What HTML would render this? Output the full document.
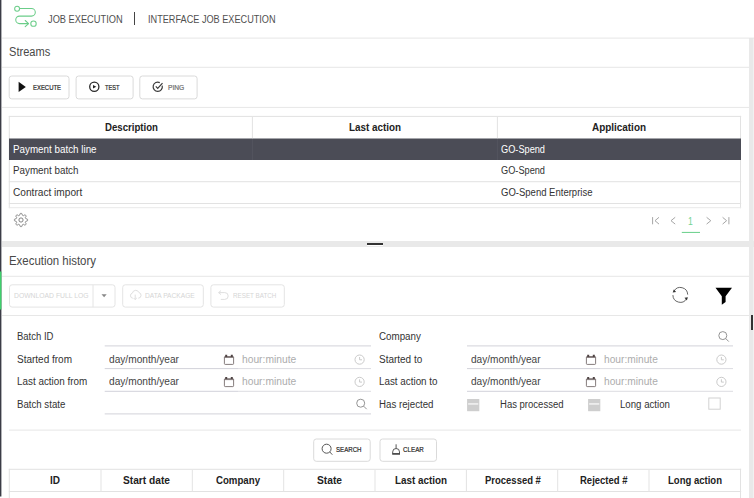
<!DOCTYPE html>
<html><head><meta charset="utf-8">
<style>
*{box-sizing:border-box;margin:0;padding:0}
html,body{width:754px;height:498px;overflow:hidden;background:#fff}
body{position:relative;font-family:"Liberation Sans",sans-serif;color:#333;font-size:10px}
.abs{position:absolute}
.t{position:absolute;white-space:nowrap;line-height:1;transform-origin:0 50%}
.hl{position:absolute;height:1px;background:#e6e6e6}
.vl{position:absolute;width:1px;background:#e4e4e4}
.btn{position:absolute;height:24px;border:1px solid #dedede;border-radius:3px;background:#fff}
.ul{position:absolute;height:1px;background:#d6d6de}
svg{position:absolute;overflow:visible}
</style></head><body>
<!-- edges -->
<svg style="left:0;top:0" width="4" height="498" viewBox="0 0 4 498"><rect x="0" y="0" width="1.400" height="496.500" fill="#3b3c46"/><rect x="0" y="271.500" width="1.400" height="38" fill="#3fd06c"/></svg>
<div class="abs" style="left:749px;top:38px;width:4px;height:460px;background:#e9e9e9"></div><div class="abs" style="left:753px;top:38px;width:1px;height:460px;background:#f1f1f1"></div>
<div class="abs" style="left:751px;top:315px;width:2px;height:15px;background:#333"></div>

<svg style="left:0;top:0" width="754" height="498" viewBox="0 0 754 498">
<g fill="#e7e7e7">
<rect x="2" y="37.600" width="752" height="1"/>
<rect x="2" y="66.800" width="747" height="1"/>
<rect x="2" y="106.900" width="747" height="1"/>
<rect x="2" y="275.800" width="747" height="1"/>
<rect x="2" y="315" width="747" height="1"/>
<rect x="9" y="429.600" width="732" height="1"/>
</g>
<g fill="#e2e2e2">
<rect x="8.800" y="115.900" width="732.400" height="1"/>
<rect x="8.800" y="181.200" width="732.400" height="1"/>
<rect x="8.800" y="203" width="732.400" height="1"/>
<rect x="8.800" y="115.900" width="1" height="92.300"/>
<rect x="740" y="115.900" width="1" height="92.300"/>
<rect x="8.800" y="468.800" width="732.400" height="1"/>
<rect x="8.800" y="491" width="732.400" height="1"/>
<rect x="8.800" y="468.800" width="1" height="30"/>
<rect x="740" y="468.800" width="1" height="30"/>
</g>
<rect x="8.800" y="207.200" width="732.400" height="1" fill="#e9e9e9"/>
</svg>
<!-- header -->
<svg style="left:0;top:0" width="45" height="37" viewBox="0 0 45 37" fill="none" stroke="#6bcd89" stroke-width="1.050" stroke-linecap="round" stroke-linejoin="round">
<circle cx="17.100" cy="8.700" r="2.450"/>
<path d="M19.700 8.500H31.500a3.800 3.800 0 0 1 0 7.600H19.500a3.750 3.750 0 0 0 0 7.500H28.200"/>
<path d="M25.200 20.500L28.600 23.600L25.200 26.700"/>
<circle cx="33.500" cy="23.650" r="2.700"/>
</svg>
<div class="abs" style="left:134px;top:12px;width:1px;height:13px;background:#444"></div>

<!-- streams panel -->
<svg style="left:0;top:0" width="200" height="110" viewBox="0 0 200 110">
<path d="M18.600 81.800L25.800 86.900L18.600 92Z" fill="#111"/>
<circle cx="94.3" cy="86.7" r="4.600" fill="none" stroke="#2a2a2a" stroke-width="1.300"/>
<path d="M93 84.9L96.3 86.7L93 88.5Z" fill="#222"/>
<path d="M162.200 85.600A4.600 4.600 0 1 1 159.800 82.600" fill="none" stroke="#3a3a3a" stroke-width="1.200"/>
<path d="M155.800 86.400l1.900 1.900l4.800-5.200" fill="none" stroke="#3a3a3a" stroke-width="1.200"/>
</svg>

<!-- streams table -->
<svg style="left:0;top:130px" width="754" height="40" viewBox="0 130 754 40"><rect x="9" y="138.500" width="732" height="21.500" fill="#4b4c56"/><rect x="251.900" y="138.500" width="1" height="21.500" fill="#54555f"/><rect x="496.900" y="138.500" width="1" height="21.500" fill="#54555f"/></svg>

<svg style="left:0;top:0" width="754" height="498" viewBox="0 0 754 498" fill="#e3e3e3"><rect x="100.5" y="470" width="1" height="22"/><rect x="191.8" y="470" width="1" height="22"/><rect x="283.2" y="470" width="1" height="22"/><rect x="374.5" y="470" width="1" height="22"/><rect x="465.9" y="470" width="1" height="22"/><rect x="557.2" y="470" width="1" height="22"/><rect x="648.5" y="470" width="1" height="22"/><rect x="251.900" y="117" width="1" height="21.500"/><rect x="496.900" y="117" width="1" height="21.500"/></svg>
<!-- gear -->
<svg style="left:12.8px;top:211.800px" width="16" height="16" viewBox="-8 -8 16 16" fill="none" stroke="#6e6e6e" stroke-width=".85">
<circle r="2.100"/>
<path d="M6.60 0.00L6.59 0.26L6.55 0.52L6.45 0.76L6.19 0.98L5.64 1.12L5.09 1.22L4.81 1.36L4.69 1.52L4.60 1.70L4.53 1.88L4.45 2.05L4.39 2.24L4.36 2.44L4.46 2.74L4.78 3.19L5.07 3.68L5.10 4.02L5.00 4.27L4.84 4.48L4.67 4.67L4.48 4.84L4.27 5.00L4.02 5.10L3.68 5.07L3.19 4.78L2.74 4.46L2.44 4.36L2.24 4.39L2.05 4.45L1.88 4.53L1.70 4.60L1.52 4.69L1.36 4.81L1.22 5.09L1.12 5.64L0.98 6.19L0.76 6.45L0.52 6.55L0.26 6.59L0.00 6.60L-0.26 6.59L-0.52 6.55L-0.76 6.45L-0.98 6.19L-1.12 5.64L-1.22 5.09L-1.36 4.81L-1.52 4.69L-1.70 4.60L-1.88 4.53L-2.05 4.45L-2.24 4.39L-2.44 4.36L-2.74 4.46L-3.19 4.78L-3.68 5.07L-4.02 5.10L-4.27 5.00L-4.48 4.84L-4.67 4.67L-4.84 4.48L-5.00 4.27L-5.10 4.02L-5.07 3.68L-4.78 3.19L-4.46 2.74L-4.36 2.44L-4.39 2.24L-4.45 2.05L-4.53 1.88L-4.60 1.70L-4.69 1.52L-4.81 1.36L-5.09 1.22L-5.64 1.12L-6.19 0.98L-6.45 0.76L-6.55 0.52L-6.59 0.26L-6.60 0.00L-6.59 -0.26L-6.55 -0.52L-6.45 -0.76L-6.19 -0.98L-5.64 -1.12L-5.09 -1.22L-4.81 -1.36L-4.69 -1.52L-4.60 -1.70L-4.53 -1.88L-4.45 -2.05L-4.39 -2.24L-4.36 -2.44L-4.46 -2.74L-4.78 -3.19L-5.07 -3.68L-5.10 -4.02L-5.00 -4.27L-4.84 -4.48L-4.67 -4.67L-4.48 -4.84L-4.27 -5.00L-4.02 -5.10L-3.68 -5.07L-3.19 -4.78L-2.74 -4.46L-2.44 -4.36L-2.24 -4.39L-2.05 -4.45L-1.88 -4.53L-1.70 -4.60L-1.52 -4.69L-1.36 -4.81L-1.22 -5.09L-1.12 -5.64L-0.98 -6.19L-0.76 -6.45L-0.52 -6.55L-0.26 -6.59L-0.00 -6.60L0.26 -6.59L0.52 -6.55L0.76 -6.45L0.98 -6.19L1.12 -5.64L1.22 -5.09L1.36 -4.81L1.52 -4.69L1.70 -4.60L1.88 -4.53L2.05 -4.45L2.24 -4.39L2.44 -4.36L2.74 -4.46L3.19 -4.78L3.68 -5.07L4.02 -5.10L4.27 -5.00L4.48 -4.84L4.67 -4.67L4.84 -4.48L5.00 -4.27L5.10 -4.02L5.07 -3.68L4.78 -3.19L4.46 -2.74L4.36 -2.44L4.39 -2.24L4.45 -2.05L4.53 -1.88L4.60 -1.70L4.69 -1.52L4.81 -1.36L5.09 -1.22L5.64 -1.12L6.19 -0.98L6.45 -0.76L6.55 -0.52L6.59 -0.26Z" stroke-linejoin="round"/>
</svg>

<!-- pager -->
<svg style="left:640px;top:210px" width="100" height="30" viewBox="640 210 100 30" fill="none" stroke="#a6a6a6" stroke-width="1">
<path d="M652.600 217.100v7.200M659 217.300l-4 3.400l4 3.400"/>
<path d="M675.200 217.300l-4.200 3.400l4.200 3.400"/>
<path d="M706.600 217.300l4.200 3.400l-4.200 3.400"/>
<path d="M728.900 217.100v7.200M722.600 217.300l4 3.400l-4 3.400"/>
</svg>
<svg style="left:680px;top:230px" width="24" height="6" viewBox="680 230 24 6"><rect x="681.800" y="231.900" width="18.200" height="1.100" fill="#74d393"/></svg>

<!-- splitter -->
<div class="abs" style="left:2px;top:241px;width:752px;height:6px;background:#e9e9e9"></div>
<div class="abs" style="left:367px;top:243px;width:16px;height:2px;background:#333;box-shadow:0 1px 0 #fff"></div>

<!-- execution history -->
<svg style="left:0;top:276px" width="754" height="40" viewBox="0 276 754 40" fill="none">
<path d="M101.5 294.3h5.2l-2.6 2.9z" fill="#888"/>
<g stroke="#dfdfdf" stroke-width="1">
<path d="M132.8 298.2a2.6 2.6 0 0 1-.4-5.1a3.4 3.4 0 0 1 6.5-.6a2.9 2.9 0 0 1-.6 5.7"/>
<path d="M135.2 294.6v5M133.6 298l1.6 1.6l1.6-1.6"/>
<path d="M221 290.6l-2.4 2l2.4 2M218.8 292.6h6a3.4 3.4 0 0 1 0 6.8h-4"/>
</g>
<g stroke="#4a4a4a" stroke-width=".85">
<path d="M687.700 294.600A7.400 7.400 0 0 0 674 291"/>
<path d="M672.900 295.100A7.400 7.400 0 0 0 686.600 298.800"/>
</g>
<path d="M672.700 292.500l3.400-.5l-2.300-2.600z" fill="#333"/>
<path d="M687.900 297.300l-3.400.5l2.300 2.600z" fill="#333"/>
<path d="M715.500 287.800h16.500l-6.400 8.500v5.700l-3.800 2.700v-8.400z" fill="#000"/>
</svg>

<!-- filter form -->
<svg style="left:0;top:318px" width="754" height="110" viewBox="0 318 754 110" fill="none">
<g transform="translate(223.900 355.100)"><rect x=".5" y="1.400" width="9.200" height="7.900" rx=".8" stroke="#6f6464" stroke-width=".85"/><path d="M.5 2.300h9.200" stroke="#6f6464" stroke-width=".9"/><path d="M1.300 -.4h2v2.200h-2zM6.900 -.4h2v2.200h-2z" fill="#4f4444"/></g><g transform="translate(223.900 377.300)"><rect x=".5" y="1.400" width="9.200" height="7.900" rx=".8" stroke="#6f6464" stroke-width=".85"/><path d="M.5 2.300h9.200" stroke="#6f6464" stroke-width=".9"/><path d="M1.300 -.4h2v2.200h-2zM6.900 -.4h2v2.200h-2z" fill="#4f4444"/></g>
<g transform="translate(585.900 355.100)"><rect x=".5" y="1.400" width="9.200" height="7.900" rx=".8" stroke="#6f6464" stroke-width=".85"/><path d="M.5 2.300h9.200" stroke="#6f6464" stroke-width=".9"/><path d="M1.300 -.4h2v2.200h-2zM6.900 -.4h2v2.200h-2z" fill="#4f4444"/></g><g transform="translate(585.900 377.300)"><rect x=".5" y="1.400" width="9.200" height="7.900" rx=".8" stroke="#6f6464" stroke-width=".85"/><path d="M.5 2.300h9.200" stroke="#6f6464" stroke-width=".9"/><path d="M1.300 -.4h2v2.200h-2zM6.900 -.4h2v2.200h-2z" fill="#4f4444"/></g>
<g transform="translate(359.600 359.600)"><circle r="4.600" stroke="#c4c4c4" stroke-width=".9"/><path d="M0-2.600v2.800h2.400" stroke="#c4c4c4" stroke-width=".9"/></g><g transform="translate(359.600 381.900)"><circle r="4.600" stroke="#c4c4c4" stroke-width=".9"/><path d="M0-2.600v2.800h2.400" stroke="#c4c4c4" stroke-width=".9"/></g>
<g transform="translate(721.400 359.600)"><circle r="4.600" stroke="#c4c4c4" stroke-width=".9"/><path d="M0-2.600v2.800h2.400" stroke="#c4c4c4" stroke-width=".9"/></g><g transform="translate(721.400 381.900)"><circle r="4.600" stroke="#c4c4c4" stroke-width=".9"/><path d="M0-2.600v2.800h2.400" stroke="#c4c4c4" stroke-width=".9"/></g>
<g transform="translate(361.700 404.200)"><circle cx="-1" cy="-1" r="4" stroke="#888" stroke-width=".9"/><path d="M2 2l3 3" stroke="#888" stroke-width=".9"/></g>
<g transform="translate(723.800 336.600)"><circle cx="-1" cy="-1" r="4" stroke="#888" stroke-width=".9"/><path d="M2 2l3 3" stroke="#888" stroke-width=".9"/></g>
</svg>
<svg style="left:460px;top:392px" width="150" height="26" viewBox="460 392 150 26"><rect x="467.100" y="399" width="12.200" height="12.200" fill="#cecece"/><rect x="468.100" y="403.400" width="10.200" height="1.100" fill="#fff"/><rect x="588.100" y="399" width="12.200" height="12.200" fill="#cecece"/><rect x="589.100" y="403.400" width="10.200" height="1.100" fill="#fff"/></svg>
<svg style="left:700px;top:390px" width="30" height="30" viewBox="700 390 30 30"><rect x="708.800" y="398" width="11.400" height="11.200" fill="#fff" stroke="#d2d2d2"/></svg>

<svg style="left:300px;top:438px" width="140" height="24" viewBox="300 438 140 24" fill="none" stroke="#444" stroke-width=".9">
<circle cx="326.600" cy="448.700" r="4.500"/><path d="M329.800 452l2.500 2.700"/>
<path d="M396.100 444.300v4.200M392.700 453.600v-1.700a3.400 3.400 0 0 1 6.800 0v1.700"/><path d="M392.200 453.900h7.800" stroke-width="1.700"/>
</svg>

<!-- bottom table -->

<svg style="left:0;top:0" width="754" height="498" viewBox="0 0 754 498" fill="none" stroke-width="1">
<g stroke="#dadada">
<rect x="9.2" y="76" width="59.8" height="22.9" rx="2.6"/>
<rect x="76.100" y="76" width="57" height="22.9" rx="2.6"/>
<rect x="139.800" y="76" width="57.300" height="22.9" rx="2.6"/>
<rect x="313.700" y="439" width="56.500" height="22.300" rx="2.6"/>
<rect x="380" y="439" width="56.500" height="22.300" rx="2.6"/>
</g>
<g stroke="#e4e4e4">
<rect x="9.500" y="284.800" width="105.500" height="22.300" rx="2.6"/>
<path d="M93 284.800v22.300"/>
<rect x="122.700" y="284.800" width="80.600" height="22.300" rx="2.6"/>
<rect x="210.900" y="284.800" width="73.400" height="22.300" rx="2.6"/>
</g>
</svg>
<svg style="left:0;top:0" width="754" height="498" viewBox="0 0 754 498">
<g fill="#d2d2da">
<rect x="104.700" y="345.400" width="266.300" height="1"/>
<rect x="104.700" y="368.100" width="133.300" height="1"/>
<rect x="104.700" y="390.800" width="133.300" height="1"/>
<rect x="104.700" y="413.400" width="266.300" height="1"/>
<rect x="467" y="345.400" width="266" height="1"/>
<rect x="467" y="368.100" width="133" height="1"/>
<rect x="467" y="390.800" width="133" height="1"/>
</g>
<g fill="#dcdce2">
<rect x="238" y="368.100" width="133" height="1"/>
<rect x="238" y="390.800" width="133" height="1"/>
<rect x="600" y="368.100" width="133" height="1"/>
<rect x="600" y="390.800" width="133" height="1"/>
</g>
</svg>
<div class="t" style="left:47.6px;top:14.00px;font-size:11.2px;color:#505050;transform:scaleX(0.8276);">JOB EXECUTION</div>
<div class="t" style="left:147.6px;top:14.00px;font-size:11.2px;color:#505050;transform:scaleX(0.8178);">INTERFACE JOB EXECUTION</div>
<div class="t" style="left:9px;top:46.00px;font-size:12px;color:#484848;transform:scaleX(0.9220);">Streams</div>
<div class="t" style="left:33px;top:84.00px;font-size:7.5px;color:#2a2a2a;-webkit-text-stroke:.22px;transform:scaleX(0.7901);">EXECUTE</div>
<div class="t" style="left:104.8px;top:84.00px;font-size:7.5px;color:#2a2a2a;-webkit-text-stroke:.22px;transform:scaleX(0.7615);">TEST</div>
<div class="t" style="left:168px;top:84.00px;font-size:7.5px;color:#707070;-webkit-text-stroke:.22px;transform:scaleX(0.8886);">PING</div>
<div class="t" style="left:104.7px;top:123.00px;font-size:10px;color:#222;font-weight:bold;transform:scaleX(0.9615);">Description</div>
<div class="t" style="left:349px;top:123.00px;font-size:10px;color:#222;font-weight:bold;transform:scaleX(0.9849);">Last action</div>
<div class="t" style="left:592px;top:123.00px;font-size:10px;color:#222;font-weight:bold;transform:scaleX(0.9917);">Application</div>
<div class="t" style="left:13px;top:145.00px;font-size:10px;color:#fff;transform:scaleX(0.9828);">Payment batch line</div>
<div class="t" style="left:13px;top:166.00px;font-size:10px;color:#333;transform:scaleX(0.9817);">Payment batch</div>
<div class="t" style="left:13px;top:188.00px;font-size:10px;color:#333;transform:scaleX(1.0123);">Contract import</div>
<div class="t" style="left:501px;top:145.00px;font-size:10px;color:#fff;transform:scaleX(0.9203);">GO-Spend</div>
<div class="t" style="left:501px;top:166.00px;font-size:10px;color:#333;transform:scaleX(0.9203);">GO-Spend</div>
<div class="t" style="left:501px;top:188.00px;font-size:10px;color:#333;transform:scaleX(0.9514);">GO-Spend Enterprise</div>
<div class="t" style="left:688.4px;top:217.00px;font-size:10px;color:#74d393;transform:scaleX(0.8629);">1</div>
<div class="t" style="left:9px;top:255.00px;font-size:12px;color:#484848;transform:scaleX(0.9520);">Execution history</div>
<div class="t" style="left:13.5px;top:292.00px;font-size:7.5px;color:#d5d5d5;transform:scaleX(0.9058);">DOWNLOAD FULL LOG</div>
<div class="t" style="left:145.3px;top:292.00px;font-size:7.5px;color:#d5d5d5;transform:scaleX(0.8833);">DATA PACKAGE</div>
<div class="t" style="left:233.2px;top:292.00px;font-size:7.5px;color:#d5d5d5;transform:scaleX(0.8374);">RESET BATCH</div>
<div class="t" style="left:17px;top:332.00px;font-size:10px;color:#333;transform:scaleX(0.9489);">Batch ID</div>
<div class="t" style="left:17px;top:355.00px;font-size:10px;color:#333;transform:scaleX(0.9994);">Started from</div>
<div class="t" style="left:17px;top:377.00px;font-size:10px;color:#333;transform:scaleX(0.9866);">Last action from</div>
<div class="t" style="left:17px;top:400.00px;font-size:10px;color:#333;transform:scaleX(0.9654);">Batch state</div>
<div class="t" style="left:378.5px;top:332.00px;font-size:10px;color:#333;transform:scaleX(0.9787);">Company</div>
<div class="t" style="left:378.5px;top:355.00px;font-size:10px;color:#333;transform:scaleX(0.9963);">Started to</div>
<div class="t" style="left:378.5px;top:377.00px;font-size:10px;color:#333;transform:scaleX(0.9835);">Last action to</div>
<div class="t" style="left:378.5px;top:400.00px;font-size:10px;color:#333;transform:scaleX(0.9708);">Has rejected</div>
<div class="t" style="left:499.8px;top:400.00px;font-size:10px;color:#333;transform:scaleX(0.9520);">Has processed</div>
<div class="t" style="left:620.3px;top:400.00px;font-size:10px;color:#333;transform:scaleX(0.9648);">Long action</div>
<div class="t" style="left:108.9px;top:355.00px;font-size:10px;color:#444;transform:scaleX(1.0154);">day/month/year</div>
<div class="t" style="left:108.9px;top:377.00px;font-size:10px;color:#444;transform:scaleX(1.0154);">day/month/year</div>
<div class="t" style="left:471.3px;top:355.00px;font-size:10px;color:#444;transform:scaleX(1.0096);">day/month/year</div>
<div class="t" style="left:471.3px;top:377.00px;font-size:10px;color:#444;transform:scaleX(1.0096);">day/month/year</div>
<div class="t" style="left:241.8px;top:355.00px;font-size:10px;color:#adadad;transform:scaleX(1.0263);">hour:minute</div>
<div class="t" style="left:241.8px;top:377.00px;font-size:10px;color:#adadad;transform:scaleX(1.0263);">hour:minute</div>
<div class="t" style="left:604.4px;top:355.00px;font-size:10px;color:#adadad;transform:scaleX(1.0187);">hour:minute</div>
<div class="t" style="left:604.4px;top:377.00px;font-size:10px;color:#adadad;transform:scaleX(1.0187);">hour:minute</div>
<div class="t" style="left:335.8px;top:446.00px;font-size:7.5px;color:#2a2a2a;-webkit-text-stroke:.22px;transform:scaleX(0.8156);">SEARCH</div>
<div class="t" style="left:402.7px;top:446.00px;font-size:7.5px;color:#2a2a2a;-webkit-text-stroke:.22px;transform:scaleX(0.8315);">CLEAR</div>
<div class="t" style="left:50px;top:476.00px;font-size:10px;color:#222;font-weight:bold;transform:scaleX(1.0000);">ID</div>
<div class="t" style="left:123px;top:476.00px;font-size:10px;color:#222;font-weight:bold;transform:scaleX(1.0190);">Start date</div>
<div class="t" style="left:216px;top:476.00px;font-size:10px;color:#222;font-weight:bold;transform:scaleX(0.9657);">Company</div>
<div class="t" style="left:317px;top:476.00px;font-size:10px;color:#222;font-weight:bold;transform:scaleX(1.0224);">State</div>
<div class="t" style="left:395px;top:476.00px;font-size:10px;color:#222;font-weight:bold;transform:scaleX(0.9849);">Last action</div>
<div class="t" style="left:484.7px;top:476.00px;font-size:10px;color:#222;font-weight:bold;transform:scaleX(0.9485);">Processed #</div>
<div class="t" style="left:579.5px;top:476.00px;font-size:10px;color:#222;font-weight:bold;transform:scaleX(0.9494);">Rejected #</div>
<div class="t" style="left:668px;top:476.00px;font-size:10px;color:#222;font-weight:bold;transform:scaleX(0.9529);">Long action</div>
</body></html>
